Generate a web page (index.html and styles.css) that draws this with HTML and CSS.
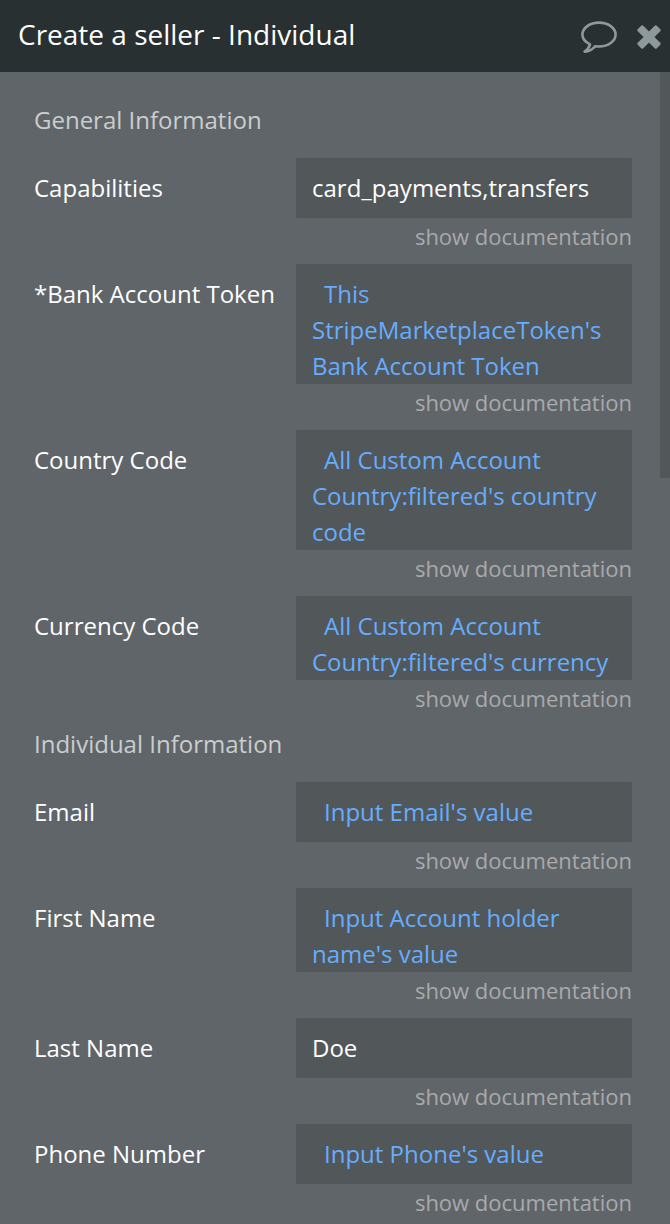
FILE: index.html
```
<!DOCTYPE html>
<html lang="en">
<head>
    <meta charset="UTF-8">
    <meta name="viewport" content="width=device-width, initial-scale=1.0">
    <title>Create a seller - Individual</title>
    <link rel="stylesheet" href="styles.css">
</head>
<body>
    <div class="panel">
        <header class="panel-header">
            <h1 class="title">Create a seller - Individual</h1>
            <button type="button" class="icon-button" aria-label="Comments">
                <svg width="36" height="32" viewBox="0 0 36 32" fill="none" stroke="currentColor" stroke-width="2.6" stroke-linejoin="round">
                    <path d="M18 1.6C8.8 1.6 1.4 7 1.4 13.6C1.4 17.6 4.4 21.2 9 23.4C8.2 26.6 6 29 3.6 30.6C8 30.4 11.6 28.4 14 25.2C15.300 25.400 16.600 25.500 18 25.500C27.200 25.500 34.600 20.200 34.600 13.600C34.600 7 27.200 1.600 18 1.600Z"/>
                </svg>
            </button>
            <button type="button" class="icon-button" aria-label="Close">
                <svg width="24" height="24" viewBox="0 0 24 24" fill="currentColor" stroke="currentColor" stroke-width="3" stroke-linejoin="round">
                    <path d="M5.200 1.800L12 8.600L18.800 1.800L22.200 5.200L15.400 12L22.200 18.800L18.800 22.200L12 15.400L5.200 22.200L1.800 18.800L8.600 12L1.800 5.200Z"/>
                </svg>
            </button>
        </header>

        <div class="panel-body">
            <form class="fields">
                <h2 class="section-title">General Information</h2>
                <div class="row">
                    <label for="capabilities">Capabilities</label>
                    <div class="control">
                        <input type="text" class="field" id="capabilities" value="card_payments,transfers">
                        <a href="#" class="doc-link">show documentation</a>
                    </div>
                </div>
                <div class="row">
                    <label for="bankToken">*Bank Account Token</label>
                    <div class="control">
                        <button type="button" class="field dynamic" id="bankToken">This StripeMarketplaceToken's Bank Account Token</button>
                        <a href="#" class="doc-link">show documentation</a>
                    </div>
                </div>
                <div class="row">
                    <label for="countryCode">Country Code</label>
                    <div class="control">
                        <button type="button" class="field dynamic" id="countryCode">All Custom Account Country:filtered's country code</button>
                        <a href="#" class="doc-link">show documentation</a>
                    </div>
                </div>
                <div class="row">
                    <label for="currencyCode">Currency Code</label>
                    <div class="control">
                        <button type="button" class="field dynamic" id="currencyCode">All Custom Account Country:filtered's currency</button>
                        <a href="#" class="doc-link">show documentation</a>
                    </div>
                </div>

                <h2 class="section-title">Individual Information</h2>
                <div class="row">
                    <label for="email">Email</label>
                    <div class="control">
                        <button type="button" class="field dynamic" id="email">Input Email's value</button>
                        <a href="#" class="doc-link">show documentation</a>
                    </div>
                </div>
                <div class="row">
                    <label for="firstName">First Name</label>
                    <div class="control">
                        <button type="button" class="field dynamic" id="firstName">Input Account holder name's value</button>
                        <a href="#" class="doc-link">show documentation</a>
                    </div>
                </div>
                <div class="row">
                    <label for="lastName">Last Name</label>
                    <div class="control">
                        <input type="text" class="field" id="lastName" value="Doe">
                        <a href="#" class="doc-link">show documentation</a>
                    </div>
                </div>
                <div class="row">
                    <label for="phone">Phone Number</label>
                    <div class="control">
                        <button type="button" class="field dynamic" id="phone">Input Phone's value</button>
                        <a href="#" class="doc-link">show documentation</a>
                    </div>
                </div>
            </form>
            <div class="scroll-thumb"></div>
        </div>
    </div>
</body>
</html>
```
FILE: styles.css
```
:root {
    --header: #293032;
    --panel: #606569;
    --field: #525759;
    --link: #66adff;
    --icon: #8e999b;
}

* {
    box-sizing: border-box;
}

body {
    margin: 0;
    font-family: "Open Sans", sans-serif;
    font-size: 24px;
    line-height: 36px;
    color: white;
    background: var(--panel);
}

.panel {
    display: flex;
    flex-direction: column;
    height: 100vh;
    overflow: hidden;
}

.panel-header {
    display: flex;
    flex-shrink: 0;
    align-items: center;
    gap: 20px;
    height: 72px;
    padding: 0 9px 4px 18px;
    background: var(--header);
}

.title {
    flex: 1;
    margin: 0;
    font-size: 28px;
    font-weight: 400;
}

.icon-button {
    display: flex;
    padding: 6px 0 0;
    border: none;
    background: none;
    color: var(--icon);
    cursor: pointer;
}

.panel-body {
    display: flex;
    flex: 1;
    align-items: flex-start;
    min-height: 0;
}

.fields {
    flex: 1;
    min-width: 0;
    padding: 30px 28px 0 34px;
}

.scroll-thumb {
    width: 10px;
    height: 406px;
    background: var(--field);
}

.section-title {
    margin: 0 0 20px;
    font-size: 24px;
    font-weight: 400;
    color: #cbcdce;
}

.row {
    display: grid;
    grid-template-columns: 262px 1fr;
}

.row label {
    padding-top: 12px;
}

.control {
    display: flex;
    flex-direction: column;
    min-width: 0;
}

.field {
    width: 100%;
    min-height: 60px;
    padding: 12px 16px;
    border: none;
    border-radius: 2px;
    background: var(--field);
    color: white;
    font: inherit;
    text-align: left;
}

.dynamic {
    display: grid;
    align-content: start;
    padding-bottom: 0;
    color: var(--link);
    text-indent: 12px;
    cursor: pointer;
}

.doc-link {
    align-self: flex-end;
    margin-bottom: 10px;
    font-size: 22px;
    line-height: 36px;
    color: #a8aaab;
    text-decoration: none;
}
```
